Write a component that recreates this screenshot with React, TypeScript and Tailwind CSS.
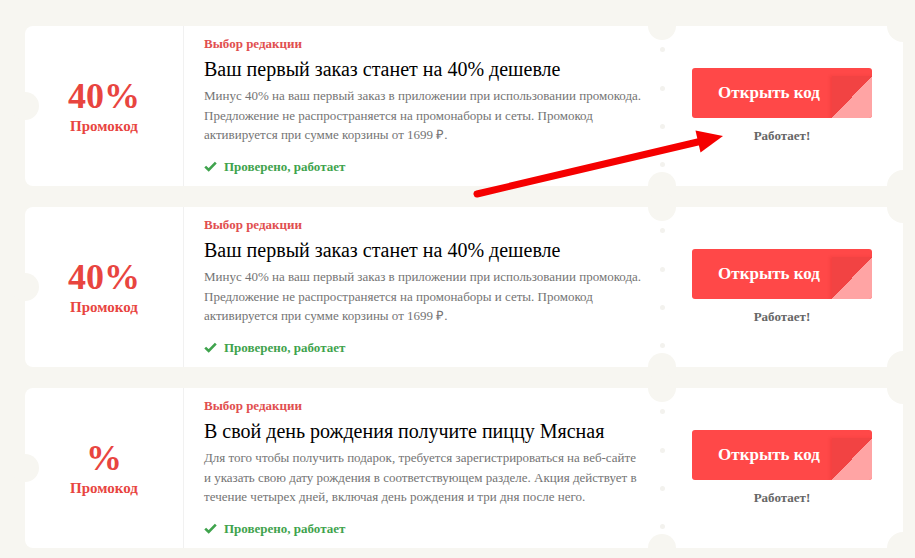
import { Fragment } from 'react';

const coupons = [
  {
    value: '40%',
    title: 'Ваш первый заказ станет на 40% дешевле',
    text: 'Минус 40% на ваш первый заказ в приложении при использовании промокода. Предложение не распространяется на промонаборы и сеты. Промокод активируется при сумме корзины от 1699 ₽.',
  },
  {
    value: '40%',
    title: 'Ваш первый заказ станет на 40% дешевле',
    text: 'Минус 40% на ваш первый заказ в приложении при использовании промокода. Предложение не распространяется на промонаборы и сеты. Промокод активируется при сумме корзины от 1699 ₽.',
  },
  {
    value: '%',
    title: 'В свой день рождения получите пиццу Мясная',
    text: 'Для того чтобы получить подарок, требуется зарегистрироваться на веб-сайте и указать свою дату рождения в соответствующем разделе. Акция действует в течение четырех дней, включая день рождения и три дня после него.',
  },
];

function CheckIcon() {
  return (
    <svg width="13" height="11" viewBox="0 0 13 11" className="mr-[7px] shrink-0">
      <path d="M1.2 5.6 L4.7 9 L11.8 1.6" fill="none" stroke="#3fa34d" strokeWidth="2.6" />
    </svg>
  );
}

function Coupon({ value, title, text }: { value: string; title: string; text: string }) {
  return (
    <div className="relative flex h-[160px] rounded-[8px] bg-white">
      <div className="flex w-[159px] shrink-0 flex-col items-center justify-center border-r border-[#f1f1f1] text-[#e8453f]">
        <div className="text-[36px] font-bold leading-[40px]">{value}</div>
        <div className="text-[15px] font-bold leading-[20px]">Промокод</div>
      </div>
      <div className="w-[477px] shrink-0 pl-[20px] pr-[18px] pt-[10px]">
        <div className="text-[13px] font-bold leading-[16px] text-[#e14f4f]">Выбор редакции</div>
        <div className="mt-[4px] text-[20px] leading-[26px] text-black">{title}</div>
        <p className="mt-[4px] text-[13px] leading-[19.5px] text-[#747474]">{text}</p>
        <div className="mt-[14px] flex items-center text-[13px] font-bold leading-[16px] text-[#3fa34d]">
          <CheckIcon />
          Проверено, работает
        </div>
      </div>
      <div className="flex flex-1 flex-col items-center justify-center">
        <button className="relative h-[50px] w-[180px] overflow-hidden rounded-[3px] bg-[#ff4848] pr-[26px] text-[17px] font-bold text-white">
          Открыть код
          <span className="absolute bottom-0 right-0 h-[42px] w-[40px] bg-[linear-gradient(to_top_left,#ffa4a4_50%,#f24343_50%)] shadow-[-2px_0_3px_rgba(180,20,20,0.15)]" />
        </button>
        <div className="mt-[10px] text-[13px] font-bold leading-[16px] text-[#666]">Работает!</div>
      </div>

      <span className="absolute left-[-14px] top-[66px] h-[28px] w-[28px] rounded-full bg-[#f7f6f1]" />
      <span className="absolute left-[623px] top-[-14px] h-[28px] w-[28px] rounded-full bg-[#f7f6f1]" />
      <span className="absolute bottom-[-14px] left-[623px] h-[28px] w-[28px] rounded-full bg-[#f7f6f1]" />
      <span className="absolute right-[-16px] top-[-16px] h-[32px] w-[32px] rounded-full bg-[#f7f6f1]" />
      <span className="absolute bottom-[-16px] right-[-16px] h-[32px] w-[32px] rounded-full bg-[#f7f6f1]" />
      {[21, 60, 98, 136].map((t) => (
        <Fragment key={t}>
          <span className="absolute left-[635px] h-[5px] w-[5px] rounded-full bg-[#f3f2ee]" style={{ top: t }} />
        </Fragment>
      ))}
    </div>
  );
}

export default function App() {
  return (
    <div className="relative h-[558px] w-[915px] overflow-hidden bg-[#f7f6f1] pl-[25px] pr-[12px] pt-[26px] font-['Liberation_Serif',serif]">
      <div className="flex flex-col gap-[21px]">
        {coupons.map((c, i) => (
          <Coupon key={i} {...c} />
        ))}
      </div>
      <svg className="pointer-events-none absolute left-0 top-0" width="915" height="558">
        <line x1="477" y1="194" x2="702" y2="141" stroke="#f50000" strokeWidth="7" strokeLinecap="round" />
        <polygon points="723,136 695.5,130.5 700.5,152.5" fill="#f50000" />
      </svg>
    </div>
  );
}
